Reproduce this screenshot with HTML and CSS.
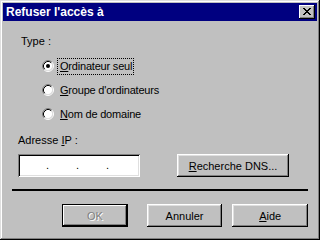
FILE: index.html
```html
<!DOCTYPE html>
<html lang="fr">
<head>
    <meta charset="UTF-8">
    <title>Refuser l'accès à</title>
    <link rel="stylesheet" href="styles.css">
</head>
<body>
    <div class="window">
        <header class="titlebar">
            <span class="title">Refuser l'accès à</span>
            <button class="close-btn">
                <svg viewBox="0 0 8 7" width="8" height="7" shape-rendering="crispEdges">
                    <path fill="#000" d="M0 0h2v1H0zM6 0h2v1H6zM1 1h2v1H1zM5 1h2v1H5zM2 2h4v1H2zM3 3h2v1H3zM2 4h4v1H2zM1 5h2v1H1zM5 5h2v1H5zM0 6h2v1H0zM6 6h2v1H6z"/>
                </svg>
            </button>
        </header>

        <div class="content">
            <div class="type-label">Type :</div>

            <div class="options">
                <div class="option">
                    <svg class="radio" viewBox="0 0 12 12" width="12" height="12">
                        <circle cx="6" cy="6" r="4.5" fill="#fff"/>
                        <path d="M2.11 9.89A5.5 5.5 0 0 1 9.89 2.11" fill="none" stroke="#808080"/>
                        <path d="M9.89 2.11A5.5 5.5 0 0 1 2.11 9.89" fill="none" stroke="#fff"/>
                        <path d="M2.82 9.18A4.5 4.5 0 0 1 9.18 2.82" fill="none" stroke="#000"/>
                        <path d="M9.18 2.82A4.5 4.5 0 0 1 2.82 9.18" fill="none" stroke="#dfdfdf"/>
                        <circle cx="6" cy="6" r="2" fill="#000"/>
                    </svg>
                    <span class="option-text focused"><u>O</u>rdinateur seul</span>
                </div>
                <div class="option">
                    <svg class="radio" viewBox="0 0 12 12" width="12" height="12">
                        <circle cx="6" cy="6" r="4.5" fill="#fff"/>
                        <path d="M2.11 9.89A5.5 5.5 0 0 1 9.89 2.11" fill="none" stroke="#808080"/>
                        <path d="M9.89 2.11A5.5 5.5 0 0 1 2.11 9.89" fill="none" stroke="#fff"/>
                        <path d="M2.82 9.18A4.5 4.5 0 0 1 9.18 2.82" fill="none" stroke="#000"/>
                        <path d="M9.18 2.82A4.5 4.5 0 0 1 2.82 9.18" fill="none" stroke="#dfdfdf"/>
                    </svg>
                    <span class="option-text"><u>G</u>roupe d'ordinateurs</span>
                </div>
                <div class="option">
                    <svg class="radio" viewBox="0 0 12 12" width="12" height="12">
                        <circle cx="6" cy="6" r="4.5" fill="#fff"/>
                        <path d="M2.11 9.89A5.5 5.5 0 0 1 9.89 2.11" fill="none" stroke="#808080"/>
                        <path d="M9.89 2.11A5.5 5.5 0 0 1 2.11 9.89" fill="none" stroke="#fff"/>
                        <path d="M2.82 9.18A4.5 4.5 0 0 1 9.18 2.82" fill="none" stroke="#000"/>
                        <path d="M9.18 2.82A4.5 4.5 0 0 1 2.82 9.18" fill="none" stroke="#dfdfdf"/>
                    </svg>
                    <span class="option-text"><u>N</u>om de domaine</span>
                </div>
            </div>

            <div class="ip-label">Adresse <u>I</u>P :</div>

            <div class="ip-row">
                <div class="ip-field">
                    <span class="ip-dot">.</span>
                    <span class="ip-dot">.</span>
                    <span class="ip-dot">.</span>
                </div>
                <button class="btn dns-btn"><u>R</u>echerche DNS...</button>
            </div>

            <div class="separator"></div>

            <div class="actions">
                <button class="btn btn-default" disabled>OK</button>
                <button class="btn">Annuler</button>
                <button class="btn"><u>A</u>ide</button>
            </div>
        </div>
    </div>
</body>
</html>
```

FILE: styles.css
```css
:root {
    --face: #c0c0c0;
    --light: #dfdfdf;
    --shadow: #808080;
    --navy: #000080;
}

* {
    margin: 0;
    padding: 0;
    box-sizing: border-box;
}

body {
    font-family: "Liberation Sans", Arial, sans-serif;
    font-size: 11px;
    line-height: 13px;
    color: #000;
    background: var(--face);
}

.window {
    width: 320px;
    height: 240px;
    padding: 3px;
    background: var(--face);
    box-shadow: inset -1px -1px #000, inset 1px 1px var(--light),
                inset -2px -2px var(--shadow), inset 2px 2px #fff;
}

.titlebar {
    height: 18px;
    background: var(--navy);
    display: flex;
    align-items: center;
    justify-content: space-between;
    padding: 0 2px 0 3px;
}

.title {
    color: #fff;
    font-weight: bold;
    font-size: 12px;
    line-height: 18px;
}

.close-btn {
    width: 16px;
    height: 14px;
    border: none;
    background: var(--face);
    display: flex;
    align-items: center;
    justify-content: center;
    padding: 0 1px 1px 0;
    box-shadow: inset -1px -1px #000, inset 1px 1px #fff,
                inset -2px -2px var(--shadow);
}

.close-btn svg {
    display: block;
}

.content {
    padding: 14px 9px 0 15px;
    display: flex;
    flex-direction: column;
}

.type-label {
    margin-left: 3px;
}

.options {
    margin: 10px 0 0 24px;
    display: flex;
    flex-direction: column;
    gap: 8px;
}

.option {
    height: 16px;
    display: flex;
    align-items: center;
}

.radio {
    display: block;
    margin-right: 3px;
}

.option-text {
    padding: 1px 1px 1px 2px;
    border: 1px dotted transparent;
    letter-spacing: -0.2px;
}

.option-text.focused {
    border-color: #000;
}

.ip-label {
    margin-top: 12px;
}

.ip-row {
    margin-top: 7px;
    display: flex;
    align-items: flex-start;
}

.ip-field {
    width: 122px;
    height: 23px;
    background: #fff;
    padding: 0 0 2px 28px;
    line-height: 19px;
    display: flex;
    align-items: flex-end;
    box-shadow: inset 1px 1px var(--shadow), inset -1px -1px #fff,
                inset 2px 2px #000, inset -2px -2px var(--light);
}

.ip-dot {
    width: 30px;
}

.btn {
    height: 23px;
    border: none;
    background: var(--face);
    font-family: inherit;
    font-size: 11px;
    color: #000;
    box-shadow: inset -1px -1px #000, inset 1px 1px #fff,
                inset -2px -2px var(--shadow), inset 2px 2px var(--light);
}

.dns-btn {
    width: 112px;
    margin-left: 37px;
}

.separator {
    height: 2px;
    background: #000;
    margin: 12px 0 0 -6px;
    width: 296px;
}

.actions {
    margin: 13px 0 0 44px;
    display: flex;
    gap: 10px;
}

.actions .btn {
    width: 76px;
}

.actions .btn-default {
    width: 66px;
    margin-right: 9px;
    color: var(--shadow);
    text-shadow: 1px 1px #fff;
    box-shadow: inset 0 0 0 1px #000, inset -2px -2px #000, inset 2px 2px #fff,
                inset -3px -3px var(--shadow);
}
```
